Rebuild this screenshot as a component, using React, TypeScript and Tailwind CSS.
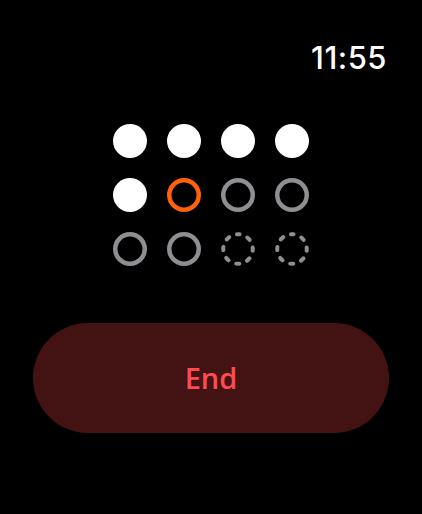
import React from 'react';

type Dot = 'filled' | 'current' | 'ring' | 'dashed';

const dots: Dot[] = [
  'filled', 'filled', 'filled', 'filled',
  'filled', 'current', 'ring', 'ring',
  'ring', 'ring', 'dashed', 'dashed',
];

const Indicator: React.FC<{ kind: Dot }> = ({ kind }) => {
  if (kind === 'filled') {
    return (
      <svg width="34" height="34" viewBox="0 0 34 34">
        <circle cx="17" cy="17" r="17" fill="#ffffff" />
      </svg>
    );
  }
  if (kind === 'dashed') {
    return (
      <svg width="34" height="34" viewBox="0 0 34 34">
        <circle
          cx="17"
          cy="17"
          r="14.75"
          fill="none"
          stroke="#8e8e93"
          strokeWidth="4"
          strokeLinecap="round"
          strokeDasharray="3.2 8.38"
          strokeDashoffset="1.6"
          transform="rotate(-90 17 17)"
        />
      </svg>
    );
  }
  return (
    <svg width="34" height="34" viewBox="0 0 34 34">
      <circle
        cx="17"
        cy="17"
        r="14.75"
        fill="none"
        stroke={kind === 'current' ? '#ff6208' : '#8e8e93'}
        strokeWidth="4.5"
      />
    </svg>
  );
};

const App: React.FC = () => {
  return (
    <div className="h-[514px] w-full bg-black flex flex-col overflow-hidden">
      <div className="flex justify-end pr-[35px] pt-[42px]">
        <span className="text-[31px] font-medium leading-none text-white font-['Inter',sans-serif] tracking-[0.5px]">
          11:55
        </span>
      </div>

      <div className="mt-[51px] self-center grid grid-cols-4 gap-x-[20px] gap-y-[20px]">
        {dots.map((d, i) => (
          <Indicator key={i} kind={d} />
        ))}
      </div>

      <button className="mx-[33px] mt-[57px] h-[110px] rounded-full bg-[#431314] flex items-center justify-center">
        <span className="text-[29px] font-semibold text-[#ff4a4f] font-['Open_Sans',sans-serif]">
          End
        </span>
      </button>
    </div>
  );
};

export default App;
